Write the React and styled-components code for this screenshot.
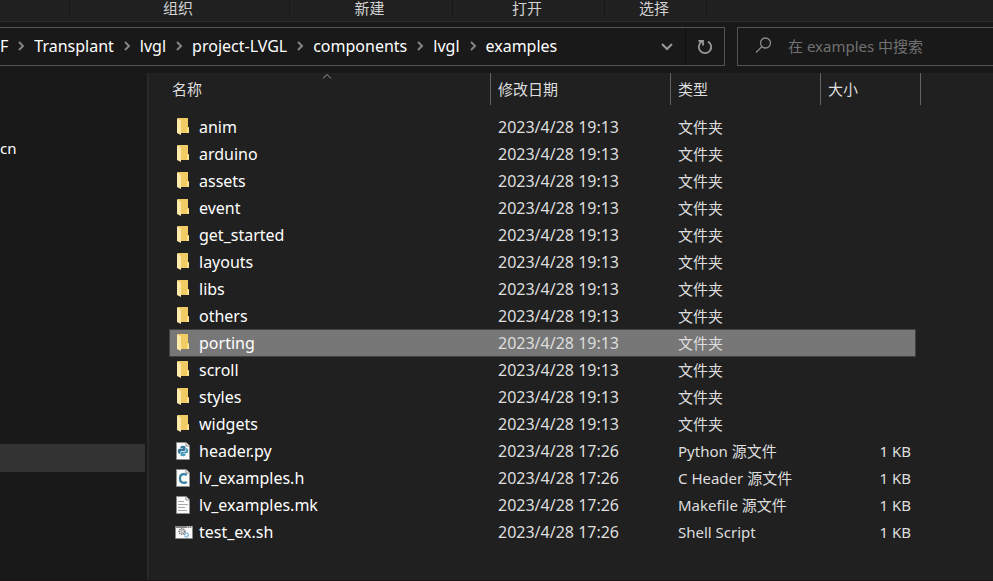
import React from "react";
import styled, { createGlobalStyle, css } from "styled-components";

const GlobalStyle = createGlobalStyle`
  * { box-sizing: border-box; }
  html, body, #root { height: 100%; }
  body {
    margin: 0;
    background: #191919;
    color: #fff;
    font: 15px/20px "Noto Sans", "Noto Sans CJK SC", sans-serif;
    overflow: hidden;
  }
  button, input { font: inherit; color: inherit; }
`;

const Window = styled.div`
  display: flex;
  flex-direction: column;
  height: 100vh;
`;

const Ribbon = styled.div`
  display: flex;
  flex: none;
  height: 22px;
  padding-bottom: 3px;
  background: #202020;
  border-bottom: 1px solid #2b2b2b;
`;

const RibbonGroup = styled.div`
  flex: none;
  width: ${(p) => p.$width}px;
  height: 18px;
  padding-right: 3px;
  line-height: 17px;
  text-align: center;
  color: #d2d2d2;
  border-right: 1px solid #181818;
`;

const NavBar = styled.div`
  display: flex;
  flex: none;
  gap: 12px;
  padding: 5px 0 7px;
`;

const AddressBar = styled.nav`
  display: flex;
  align-items: stretch;
  flex: 1;
  min-width: 0;
  height: 39px;
  border: 1px solid #535353;
  border-left: 0;
`;

const Crumbs = styled.ol`
  display: flex;
  align-items: center;
  flex: 1;
  min-width: 0;
  margin: 0;
  padding: 0 0 2px;
  list-style: none;
  font-size: 16px;
  overflow: hidden;
`;

const Crumb = styled.li`
  display: flex;
  align-items: center;
  flex: none;
`;

const CrumbLink = styled.a`
  color: #fff;
  text-decoration: none;
`;

const CrumbArrow = styled.svg`
  width: 8px;
  height: 12px;
  margin: 0 9px;
  fill: none;
  stroke: #848484;
  stroke-width: 2;
`;

const BarButton = styled.button`
  display: flex;
  align-items: center;
  justify-content: center;
  width: ${(p) => p.$width}px;
  padding: 0;
  border: 0;
  border-left: 1px solid ${(p) => (p.$divided ? "#101010" : "transparent")};
  background: none;
`;

const SearchBox = styled.label`
  display: flex;
  align-items: center;
  flex: 0 0 256px;
  min-width: 0;
  height: 39px;
  padding: 0 0 2px 17px;
  gap: 16px;
  border: 1px solid #535353;
  border-right: 0;
`;

const SearchInput = styled.input`
  flex: 1;
  min-width: 0;
  padding: 0;
  border: 0;
  outline: 0;
  background: none;
  &::placeholder { color: #717171; opacity: 1; }
`;

const Body = styled.div`
  display: flex;
  flex: 1;
  min-height: 0;
  border-bottom: 1px solid #1b1416;
`;

const Sidebar = styled.aside`
  flex: none;
  width: 149px;
  padding: 65px 2px 0 0;
  border-right: 2px solid #292929;
`;

const SidebarItem = styled.a`
  display: block;
  height: 28px;
  margin-bottom: ${(p) => p.$gap || 0}px;
  line-height: 20px;
  color: #fff;
  text-decoration: none;
  background: ${(p) => (p.$selected ? "#333" : "none")};
`;

const Content = styled.main`
  flex: 1;
  min-width: 0;
  padding-left: 20px;
  overflow: hidden;
  background: #202020;
`;

const FileTable = styled.table`
  width: 752px;
  table-layout: fixed;
  border-collapse: separate;
  border-spacing: 0;
`;

const Column = styled.col`
  width: ${(p) => p.$width}px;
`;

const HeadCell = styled.th`
  position: relative;
  height: 32px;
  padding: 0 0 0 ${(p) => (p.$first ? 3 : 7)}px;
  border-left: ${(p) => (p.$first ? "0" : "1px solid #636363")};
  text-align: left;
  font-weight: 400;
`;

const HeadEnd = styled.td`
  padding: 0;
  border-right: 1px solid #636363;
`;

const SortButton = styled.button`
  padding: 0;
  border: 0;
  background: none;
  color: #dedede;
`;

const SortMark = styled.svg`
  position: absolute;
  top: 0;
  left: 153px;
  fill: none;
  stroke: #a0a0a0;
`;

const Spacer = styled.tbody`
  td { height: 9px; padding: 0; }
`;

const selected = css`
  td:not(:last-child) {
    background: #777;
    box-shadow: 0 -1px 0 #414141, inset 0 -1px 0 #414141;
  }
  td:first-child {
    box-shadow: 0 -1px 0 #414141, inset 0 -1px 0 #414141, inset 1px 0 0 #414141;
  }
  td:nth-child(4) {
    box-shadow: 0 -1px 0 #414141, inset 0 -1px 0 #414141, inset -1px 0 0 #414141;
  }
`;

const Row = styled.tr`
  ${(p) => p.$selected && selected}
`;

const Cell = styled.td`
  height: 27px;
  padding: 0 0 2px 8px;
  color: #dedede;
  white-space: nowrap;
`;

const DateCell = styled(Cell)`
  font-size: 16px;
`;

const SizeCell = styled(Cell)`
  padding: 0 5px 2px 0;
  text-align: right;
`;

const NameCell = styled(Cell)`
  padding: 0 0 2px 5px;
  font-size: 16px;
  color: #fff;
`;

const FileName = styled.span`
  display: flex;
  align-items: center;
  gap: 6px;
`;

const Icon = styled.svg`
  flex: none;
  width: 19px;
  height: 20px;
`;

const FolderIcon = () => (
  <Icon viewBox="0 0 19 20" aria-hidden="true">
    <path d="M4 1H14V10H15V16H6L4 14Z" fill="#f1cc64" />
    <path d="M13 11H15V16H13Z" fill="#ffe391" />
    <path d="M3 1L7 4V18L3 16Z" fill="#ffe9a8" />
  </Icon>
);

const Page = () => (
  <>
    <path d="M2.5 1.5H12L15.5 5V18.5H2.5Z" fill="#fafafa" stroke="#8d8d8d" />
    <path d="M12 1.5V5H15.5" fill="#fff" stroke="#8d8d8d" />
  </>
);

const PythonIcon = () => (
  <Icon viewBox="0 0 19 20" aria-hidden="true">
    <Page />
    <path d="M6.500 5.500Q9 4 11.500 5.500V9L10.500 10H7.500Q6 10 6 12.800H5Q3.800 12 3.800 10Q3.800 7.800 5.500 7.800H9V7.200H6.500Z" fill="#36799a" />
    <path d="M11.500 14.500Q9 16 6.500 14.500V11.500L7.800 10.700H11Q12 10 12 7.200H13Q14.200 8 14.200 10Q14.200 12.200 12.500 12.200H9V12.800H11.500Z" fill="#4b9cb9" />
  </Icon>
);

const HeaderIcon = () => (
  <Icon viewBox="0 0 19 20" aria-hidden="true">
    <Page />
    <path d="M12.8 7Q11.500 6.200 10 6.200Q6 6.200 6 10.500Q6 14.800 10 14.800Q11.500 14.800 12.800 14" fill="none" stroke="#38809f" strokeWidth="2.2" />
  </Icon>
);

const TextIcon = () => (
  <Icon viewBox="0 0 19 20" aria-hidden="true">
    <Page />
    <path d="M4 6.5H10M4 9.5H14M4 12.5H11M4 15.5H13" stroke="#a9a9a9" />
  </Icon>
);

const ScriptIcon = () => (
  <Icon viewBox="0 0 19 20" aria-hidden="true">
    <path d="M1.5 4.5H18.5V16.5H1.5Z" fill="#fafafa" stroke="#85898c" />
    <path d="M1 4H19V6H1Z" fill="#85898c" />
    <path d="M13 5H14M15 5H16M17 5H18" stroke="#fff" />
    <circle cx="8" cy="9.5" r="2.8" fill="none" stroke="#777" strokeWidth="1.5" strokeDasharray="1.3 .7" />
    <circle cx="8" cy="9.5" r="1.3" fill="none" stroke="#888" strokeWidth=".8" />
    <circle cx="12.5" cy="13" r="2" fill="#e8f5fb" stroke="#6ba8c8" strokeWidth="1.3" strokeDasharray="1.3 .5" />
  </Icon>
);

const icons = {
  folder: FolderIcon,
  python: PythonIcon,
  header: HeaderIcon,
  text: TextIcon,
  script: ScriptIcon,
};

const groups = [
  { label: "", width: 70 },
  { label: "组织", width: 220 },
  { label: "新建", width: 163 },
  { label: "打开", width: 152 },
  { label: "选择", width: 102 },
];

const crumbs = ["F", "Transplant", "lvgl", "project-LVGL", "components", "lvgl", "examples"];

const folders = [
  "anim", "arduino", "assets", "event", "get_started", "layouts",
  "libs", "others", "porting", "scroll", "styles", "widgets",
].map((name) => ({ name, icon: "folder", date: "2023/4/28 19:13", type: "文件夹", size: "" }));

const files = [
  ...folders,
  { name: "header.py", icon: "python", date: "2023/4/28 17:26", type: "Python 源文件", size: "1 KB" },
  { name: "lv_examples.h", icon: "header", date: "2023/4/28 17:26", type: "C Header 源文件", size: "1 KB" },
  { name: "lv_examples.mk", icon: "text", date: "2023/4/28 17:26", type: "Makefile 源文件", size: "1 KB" },
  { name: "test_ex.sh", icon: "script", date: "2023/4/28 17:26", type: "Shell Script", size: "1 KB" },
];

function FileRow({ file }) {
  const FileIcon = icons[file.icon];
  const active = file.name === "porting";
  return (
    <Row $selected={active} aria-selected={active}>
      <NameCell>
        <FileName>
          <FileIcon />
          {file.name}
        </FileName>
      </NameCell>
      <DateCell>{file.date}</DateCell>
      <Cell>{file.type}</Cell>
      <SizeCell>{file.size}</SizeCell>
      <td />
    </Row>
  );
}

export default function App() {
  return (
    <Window>
      <GlobalStyle />
      <Ribbon>
        {groups.map((g) => (
          <RibbonGroup key={g.label} $width={g.width}>{g.label}</RibbonGroup>
        ))}
      </Ribbon>
      <NavBar>
        <AddressBar>
          <Crumbs>
            {crumbs.map((name, i) => (
              <Crumb key={i}>
                {i > 0 && (
                  <CrumbArrow viewBox="0 0 8 12" aria-hidden="true">
                    <path d="M2 2L6 6L2 10" />
                  </CrumbArrow>
                )}
                <CrumbLink href="#">{name}</CrumbLink>
              </Crumb>
            ))}
          </Crumbs>
          <BarButton $width={37} aria-label="展开">
            <svg width="12" height="10" viewBox="0 0 12 10" fill="none" stroke="#999" strokeWidth="2">
              <path d="M1 2L6 7L11 2" />
            </svg>
          </BarButton>
          <BarButton $width={39} $divided aria-label="刷新">
            <svg width="16" height="16" viewBox="0 0 16 16" fill="none" stroke="#999" strokeWidth="1.8">
              <path d="M11 2.5A6.2 6.2 0 1 1 4.5 2.8" />
              <path d="M1.5 2H6V6.5" />
            </svg>
          </BarButton>
        </AddressBar>
        <SearchBox>
          <svg width="17" height="17" viewBox="0 0 17 17" fill="none" stroke="#8a8a8a" strokeWidth="1.3" aria-hidden="true">
            <circle cx="10.5" cy="6" r="5" />
            <path d="M7 9.5L1 15.5" />
          </svg>
          <SearchInput type="search" placeholder="在 examples 中搜索" aria-label="在 examples 中搜索" />
        </SearchBox>
      </NavBar>
      <Body>
        <Sidebar>
          <SidebarItem href="#" $gap={278}>cn</SidebarItem>
          <SidebarItem href="#" $selected aria-label="examples" />
        </Sidebar>
        <Content>
          <FileTable>
            <colgroup>
              <Column $width={321} />
              <Column $width={180} />
              <Column $width={150} />
              <Column $width={96} />
              <Column $width={5} />
            </colgroup>
            <thead>
              <tr>
                <HeadCell $first aria-sort="ascending">
                  <SortMark width="10" height="7" viewBox="0 0 10 7" aria-hidden="true">
                    <path d="M1 5.5L5 1.5L9 5.5" />
                  </SortMark>
                  <SortButton>名称</SortButton>
                </HeadCell>
                <HeadCell><SortButton>修改日期</SortButton></HeadCell>
                <HeadCell><SortButton>类型</SortButton></HeadCell>
                <HeadCell><SortButton>大小</SortButton></HeadCell>
                <HeadEnd />
              </tr>
            </thead>
            <Spacer aria-hidden="true">
              <tr><td colSpan={5} /></tr>
            </Spacer>
            <tbody>
              {files.map((file) => <FileRow key={file.name} file={file} />)}
            </tbody>
          </FileTable>
        </Content>
      </Body>
    </Window>
  );
}
